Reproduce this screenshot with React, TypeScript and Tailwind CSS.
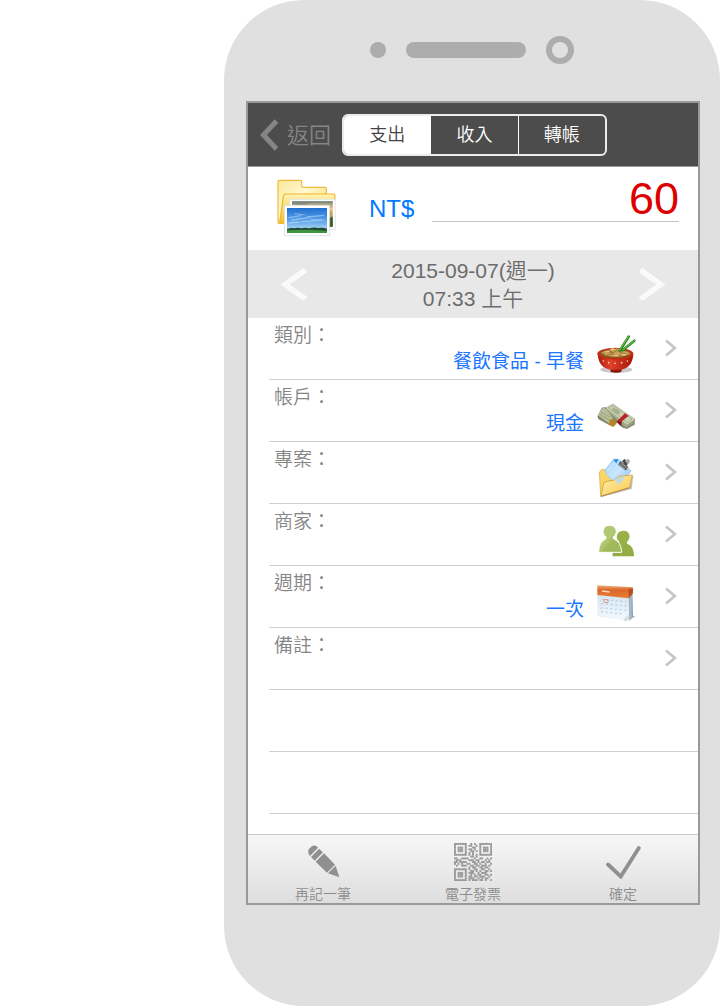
import { useState, type ReactNode } from "react";

function RowChevron() {
  return (
    <svg viewBox="0 0 14 18" fill="none" stroke="#c5c5ca" className="mt-[21px] ml-7 h-[18px] w-[14px]" aria-hidden="true">
      <path d="m2 1.500 8.800 7.500L2 16.500" strokeWidth="2.700" />
    </svg>
  );
}

function PhotoFolderIcon() {
  return (
    <svg viewBox="27 24 192 192" className="size-16" aria-hidden="true">
      <defs>
        <linearGradient id="folder-back" x1="0" y1="0" x2="1" y2="1">
          <stop offset="0" stopColor="#fbe795" />
          <stop offset="0.4" stopColor="#fff8d0" />
          <stop offset="1" stopColor="#f7cf4f" />
        </linearGradient>
        <linearGradient id="folder-front" x1="0" y1="0" x2="0" y2="1">
          <stop offset="0" stopColor="#fff3b5" />
          <stop offset="1" stopColor="#f8c020" />
        </linearGradient>
        <linearGradient id="photo-sky" x1="0" y1="0" x2="0" y2="1">
          <stop offset="0" stopColor="#1f6fd2" />
          <stop offset="0.5" stopColor="#5aa2e8" />
          <stop offset="0.8" stopColor="#9fcdf2" />
        </linearGradient>
        <linearGradient id="photo-field" x1="0" y1="0" x2="0" y2="1">
          <stop offset="0" stopColor="#8d9a8a" />
          <stop offset="0.3" stopColor="#e8b069" />
          <stop offset="1" stopColor="#4d8038" />
        </linearGradient>
      </defs>
      <path d="M42 163H54l130-60V58q0-3-4-3H115q-5 0-5-5V37q0-3-4-3H43q-4 0-4 4v122q0 3 3 3Z" fill="url(#folder-back)" stroke="#ecbb3a" strokeWidth="3.500" />
      <path d="M44 160 55 82q1-7 7-7h145q3 0 3 4l-6 84H46Z" fill="url(#folder-front)" stroke="#eeb62e" strokeWidth="3.500" />
      <path d="M74 91H211v91H74z" fill="#fcfcfc" stroke="#d8dde0" strokeWidth="2" />
      <path d="M81 97H203v76H81z" fill="url(#photo-field)" />
      <path d="M81 97h122v6l-60-2-30 6-32-2z" fill="#7c897d" />
      <path d="M160 112q25-6 43 6v8q-20-12-43-8z" fill="#f3c88b" />
      <path d="M190 150l13-7v30h-13z" fill="#2f5b2b" />
      <path d="M58 109H194v91H58z" fill="#fff" stroke="#cfd7dc" strokeWidth="2" />
      <path d="M66 117H186v75H66z" fill="url(#photo-sky)" />
      <g fill="none" stroke="#d9effd" strokeLinecap="round" opacity="0.45">
        <path d="m72 146 34-6M80 153l52-7M128 144l48-5M110 158l60-4M72 162l30-3" strokeWidth="4" />
        <path d="M90 134l28 4M138 151l40 2" strokeWidth="3" />
      </g>
      <path d="M66 180q12-4 22-2 12-3 20 0 14-3 24 0 16-4 28-1 14-2 26 2v13H66Z" fill="#204b32" />
      <path d="M66 184q50-4 120 1v7H66Z" fill="#3f9440" />
    </svg>
  );
}

function BowlIcon() {
  return (
    <svg viewBox="21 27 120 120" className="size-10" aria-hidden="true">
      <defs>
        <linearGradient id="bowl-red" x1="0" y1="0" x2="1" y2="0">
          <stop offset="0" stopColor="#a91b0b" />
          <stop offset="0.35" stopColor="#e2402a" />
          <stop offset="1" stopColor="#a51708" />
        </linearGradient>
      </defs>
      <ellipse cx="82" cy="134" rx="48" ry="10" fill="#c9c9c9" />
      <path d="M62 124h38l-3 16q-16 6-32 0Z" fill="#8e1509" />
      <path d="M26 86q2 44 42 48h25q38-5 40-48Z" fill="url(#bowl-red)" />
      <ellipse cx="79" cy="86" rx="54" ry="18" fill="#c92b14" />
      <ellipse cx="79" cy="86" rx="47" ry="14" fill="#8a5322" />
      <path d="M36 84q10-9 24-8 6-10 18-5 20-2 26 6 14 2 20 9-16 9-44 9-30 0-44-11Z" fill="#cda158" />
      <path d="m42 86 16-6 12 5 14-9 14 8 18 3M52 91l18-4 18 5 20-5M60 77l12 5M90 80l12-4" fill="none" stroke="#94692f" strokeWidth="2.500" />
      <path d="m48 82 12-3M74 90l14 2M98 89l14-1M66 74l10-1" stroke="#f2d892" strokeWidth="3" />
      <path d="M92 77 119 35M101 76l35-29" stroke="#2d8a22" strokeWidth="8" strokeLinecap="round" />
      <path d="M92 75 118 35M102 74l34-27" stroke="#74c850" strokeWidth="3" strokeLinecap="round" />
      <g fill="#fbd9cc">
        <circle cx="43" cy="108" r="2.500" />
        <circle cx="59" cy="113" r="2.500" />
        <circle cx="78" cy="115" r="2.500" />
        <circle cx="98" cy="113" r="2.500" />
        <circle cx="115" cy="108" r="2.500" />
      </g>
    </svg>
  );
}

function CashIcon() {
  return (
    <svg viewBox="21 213 120 120" className="size-10" aria-hidden="true">
      <path d="m26 274 12-26 40-4 30 34-40 26-40-22Z" fill="#757c60" />
      <path d="m26 271 15-24 38 18-17 32Z" fill="#b6bd98" />
      <path d="m27 277 32 19M29 281l30 17M33 268l30 18M36 261l28 16" stroke="#8f9677" strokeWidth="2" />
      <path d="m62 285 14-5 6 16-9 10-13-7Z" fill="#b88421" />
      <path d="m50 248 22-12 66 46-1 17-24 13-15-5-30-32Z" fill="#858c70" />
      <path d="m50 248 22-12 66 46-24 18Z" fill="#ccd3b5" />
      <path d="m52 251 61 50 24-16M54 254l59 51 24-15M60 261l53 46" fill="none" stroke="#b2b998" strokeWidth="2" />
      <path d="m58 248 14-7 57 41-14 11Z" fill="none" stroke="#94a07c" strokeWidth="2" />
      <ellipse cx="84" cy="260" rx="10" ry="6" transform="rotate(38 84 260)" fill="#a4b08c" />
      <path d="m72 248 7 5M68 252l7 5" stroke="#8a9772" strokeWidth="3" />
      <path d="m85 287 23-22 11 7-20 17-3 13-10-9Z" fill="#b9252c" />
      <path d="m85 287 12 4-1 11-10-9Z" fill="#84131b" />
    </svg>
  );
}

function ProjectIcon() {
  return (
    <svg viewBox="21 39 120 120" className="size-10" aria-hidden="true">
      <defs>
        <linearGradient id="project-front" x1="0" y1="0" x2="1" y2="1">
          <stop offset="0" stopColor="#fff0a8" />
          <stop offset="1" stopColor="#f9c850" />
        </linearGradient>
        <linearGradient id="project-paper" x1="0" y1="0" x2="1" y2="1">
          <stop offset="0" stopColor="#a8d6fb" />
          <stop offset="0.5" stopColor="#c8e5fd" />
          <stop offset="1" stopColor="#7db8f2" />
        </linearGradient>
      </defs>
      <path d="m36 157 92-25 5-38-5-2-92 54Z" fill="#858585" opacity="0.5" />
      <path d="m31 82 9-10 9 3 4 9 62 17-80 50Z" fill="#f8d565" stroke="#d5a544" strokeWidth="2" />
      <path d="m48 75 26-33 16 1 36 34-24 39-14 7-35-34Z" fill="url(#project-paper)" stroke="#8cc3ec" strokeWidth="2" />
      <path d="m73 44 15-1-6 12Z" fill="#1389ee" />
      <path d="m56 77 22-25M65 83l26-26M73 91l29-27" stroke="#eff9ff" strokeWidth="3" opacity="0.45" />
      <path d="m87 59 7-11 24 17-7 12Z" fill="#666" />
      <path d="m99 48 8-6 12 13-8 8Z" fill="#444" />
      <path d="m108 48 9-7 7 8-8 9Z" fill="#aaa" />
      <path d="m91 58 16 13M98 55l15 12" stroke="#a8a8a8" strokeWidth="3" />
      <path d="m35 154 10-42q15-5 29-6l16-12 40-4-8 38Z" fill="url(#project-front)" stroke="#c49336" strokeWidth="2" />
      <path d="m76 101 33-7-19 27Z" fill="#b8dbf0" opacity="0.9" />
      <path d="m35 154 86-26" stroke="#b0782b" strokeWidth="2" />
    </svg>
  );
}

function PeopleIcon() {
  return (
    <svg viewBox="21 225 120 120" className="size-10" aria-hidden="true">
      <defs>
        <linearGradient id="people-left" x1="0" y1="0" x2="1" y2="1">
          <stop offset="0.45" stopColor="#b3c875" />
          <stop offset="0.6" stopColor="#a0b95a" />
        </linearGradient>
        <linearGradient id="people-right" x1="0" y1="0" x2="0" y2="1">
          <stop offset="0" stopColor="#9ab348" />
          <stop offset="1" stopColor="#94ab45" />
        </linearGradient>
      </defs>
      <path d="M92 291q-9-7-9-16 2-18 20-18t19 17q0 10-8 17v5q21 6 21 38H71v-20Z" fill="url(#people-right)" />
      <path d="M51 276q-9-7-9-16 2-19 20-19t20 18q0 10-9 17v5q24 9 25 41H29q0-32 22-41Z" fill="url(#people-left)" stroke="#fff" strokeWidth="3" />
    </svg>
  );
}

function CalendarIcon() {
  return (
    <svg viewBox="21 36 120 120" className="size-10" aria-hidden="true">
      <defs>
        <linearGradient id="calendar-top" x1="0" y1="0" x2="0" y2="1">
          <stop offset="0" stopColor="#eeb17c" />
          <stop offset="0.35" stopColor="#d9662b" />
          <stop offset="1" stopColor="#ea8033" />
        </linearGradient>
        <linearGradient id="calendar-page" x1="0" y1="0" x2="0" y2="1">
          <stop offset="0" stopColor="#d3e6f2" />
          <stop offset="1" stopColor="#f6fafe" />
        </linearGradient>
      </defs>
      <path d="m108 153 32-13-12-4-25 13Z" fill="#b8c0c4" />
      <path d="m117 84 13-27 2 83-11 12Z" fill="#829cad" />
      <path d="m121 87 7-20v76l-7 7Z" fill="#a8bdcb" />
      <path d="M26 74 119 84l1 67-94-13Z" fill="url(#calendar-page)" stroke="#d6e2e9" />
      <path d="m25 46 107 6-1 18-13 15-93-10Z" fill="url(#calendar-top)" />
      <path d="M119 56h13l-1 15-12 13Z" fill="#b94d20" />
      <path d="m39 63 23 3" stroke="#fbd5b8" strokeWidth="4" />
      <g fill="none" stroke="#b9cfe3" strokeWidth="4" strokeDasharray="6 8">
        <path d="m38 88 74 7M37 101l76 7M36 113l76 8M36 125l65 7" />
      </g>
      <path d="m45 88 12 1v9l-12-1Z" fill="none" stroke="#df9895" strokeWidth="3" />
      <path d="M35 91v28" stroke="#edc2bd" strokeWidth="3" strokeDasharray="3 9" />
      <path d="m102 148 16-14 2 17Z" fill="#d7dfdf" />
    </svg>
  );
}

function PencilIcon() {
  return (
    <svg viewBox="195 60 105 105" className="size-[35px]" fill="#909090" aria-hidden="true">
      <path d="M203 89q-4-9 3-16l5-5q8-7 16-1l4 4-24 25Z" />
      <path d="m210 99 24-25 12 11-25 25Z" />
      <path d="m224 113 25-25 33 34-24 24Z" />
      <path d="m261 148 23-23 11 35Z" />
    </svg>
  );
}

const QR_ROWS = [
  "111111100101001111111",
  "100000101100101000001",
  "101110100011001011101",
  "101110101101001011101",
  "101110100110101011101",
  "100000101010001000001",
  "111111101010101111111",
  "000000000110100000000",
  "110011110001001100101",
  "011100001110110001010",
  "110111100011010110110",
  "101010011001101001001",
  "010011100110110111010",
  "000000001011001101100",
  "111111101001100110010",
  "100000100110101001101",
  "101110101110010111000",
  "101110100101011001101",
  "101110101101101110010",
  "100000101110010101100",
  "111111101011101101001",
];

function QrIcon() {
  return (
    <svg viewBox="0 0 21 21" className="size-[38px]" fill="#979797" aria-hidden="true">
      {QR_ROWS.flatMap((row, y) =>
        [...row].map((cell, x) => (cell === "1" ? <rect key={`${x}-${y}`} x={x} y={y} width="1.050" height="1.050" /> : null)),
      )}
    </svg>
  );
}

function CheckIcon() {
  return (
    <svg viewBox="0 0 35 35" className="size-[35px]" fill="none" stroke="#8f8f8f" strokeWidth="3.800" strokeLinecap="round" aria-hidden="true">
      <path d="m2 20.500 12.800 12L32.800 4" />
    </svg>
  );
}

interface Field {
  label: string;
  value?: string;
  icon?: ReactNode;
}

const FIELDS: Field[] = [
  { label: "類別", value: "餐飲食品 - 早餐", icon: <BowlIcon /> },
  { label: "帳戶", value: "現金", icon: <CashIcon /> },
  { label: "專案", icon: <ProjectIcon /> },
  { label: "商家", icon: <PeopleIcon /> },
  { label: "週期", value: "一次", icon: <CalendarIcon /> },
  { label: "備註" },
];

const TABS = ["支出", "收入", "轉帳"];

const ACTIONS = [
  { label: "再記一筆", icon: <PencilIcon /> },
  { label: "電子發票", icon: <QrIcon /> },
  { label: "確定", icon: <CheckIcon /> },
];

function FieldRow({ label, value, icon }: Field) {
  return (
    <li className="ml-[21px] border-b border-[#d0d0d0]">
      <button type="button" className="flex h-[61px] w-full items-start pr-5 pl-[5px] text-left text-[19px] leading-6">
        <span className="pt-[6px] font-[350] text-[#858585]">{label}：</span>
        <span className="flex-1 pt-8 pr-3 text-right text-[#1a75ff]">{value}</span>
        <span className="size-10 pt-4">{icon}</span>
        <RowChevron />
      </button>
    </li>
  );
}

export default function App() {
  const [tab, setTab] = useState("支出");
  const [amount, setAmount] = useState("60");

  return (
    <div className="flex min-h-screen justify-end bg-white font-['Liberation_Sans','Noto_Sans_CJK_TC',sans-serif]">
      <main className="flex w-full max-w-[496px] flex-col rounded-[80px] bg-[#e0e0e0] pr-5 pb-[101px] pl-[22px]">
        <div className="mb-px flex h-[100px] items-center justify-center gap-5 pr-[2px]">
          <span className="size-4 rounded-full bg-[#adadad]" />
          <span className="h-4 w-[120px] rounded-full bg-[#adadad]" />
          <span className="size-7 rounded-full border-6 border-[#adadad]" />
        </div>

        <div className="flex flex-1 flex-col border-2 border-[#999] bg-white">
          <header className="flex h-16 items-center border-b border-[#999] bg-[#4c4c4c] pl-[11px]">
            <button type="button" className="flex items-center gap-2 text-[22px] font-[350] text-[#858585]">
              <svg viewBox="0 0 20 32" className="h-8 w-5" fill="none" stroke="currentColor" strokeWidth="5" aria-hidden="true">
                <path d="M17.500 2 4.500 16l13 14" />
              </svg>
              <span className="pt-[2px]">返回</span>
            </button>
            <div role="tablist" className="ml-[11px] flex h-[42px] w-[265px] divide-x divide-white overflow-hidden rounded-md border-2 border-[#ececec] text-[18px]">
              {TABS.map((name) => (
                <button
                  key={name}
                  type="button"
                  role="tab"
                  aria-selected={tab === name}
                  onClick={() => setTab(name)}
                  className={tab === name ? "flex-1 bg-white pt-[2px] font-[350] text-[#444]" : "flex-1 pt-[2px] font-[350] text-white"}
                >
                  {name}
                </button>
              ))}
            </div>
          </header>

          <div className="flex h-[83px] items-center pr-[19px] pl-[26px]">
            <PhotoFolderIcon />
            <label htmlFor="amount" className="ml-[31px] text-[24px] text-[#007aff]">
              NT$
            </label>
            <input
              id="amount"
              value={amount}
              onChange={(event) => setAmount(event.target.value)}
              inputMode="decimal"
              className="ml-[18px] h-[55px] min-w-0 flex-1 self-start border-b border-[#c4c4c4] pt-[10px] text-right text-[45px] text-[#dd0000] outline-none"
            />
          </div>

          <div className="flex h-[68px] items-center justify-between bg-[#e8e8e8] px-[33px] text-[#6c6c6c]">
            <button type="button" aria-label="前一天">
              <svg viewBox="0 0 26 32" className="h-8 w-[26px]" fill="none" stroke="#fafafa" strokeWidth="5.500" aria-hidden="true">
                <path d="M24.500 2 4 16.500l20.500 14.500" />
              </svg>
            </button>
            <time dateTime="2015-09-07T07:33" className="pt-[2px] text-center text-[21px] leading-7 font-[350]">
              2015-09-07(週一)
              <br />
              07:33 上午
            </time>
            <button type="button" aria-label="後一天">
              <svg viewBox="0 0 26 32" className="h-8 w-[26px]" fill="none" stroke="#fafafa" strokeWidth="5.500" aria-hidden="true">
                <path d="M1.500 2 22 16.500 1.500 31" />
              </svg>
            </button>
          </div>

          <ul className="flex-1">
            {FIELDS.map((field) => (
              <FieldRow key={field.label} {...field} />
            ))}
            <li className="ml-[21px] h-[62px] border-b border-[#d0d0d0]" />
            <li className="ml-[21px] h-[62px] border-b border-[#d0d0d0]" />
          </ul>

          <footer className="grid h-[69px] grid-cols-3 border-t border-[#c8c8c8] bg-linear-to-b from-[#f7f7f7] to-[#dedede]">
            {ACTIONS.map(({ label, icon }) => (
              <button key={label} type="button" className="flex flex-col items-center text-[14px] leading-5 font-[350] text-[#8d8d8d]">
                <span className="flex h-[49px] items-center pt-1">{icon}</span>
                {label}
              </button>
            ))}
          </footer>
        </div>
      </main>
    </div>
  );
}
